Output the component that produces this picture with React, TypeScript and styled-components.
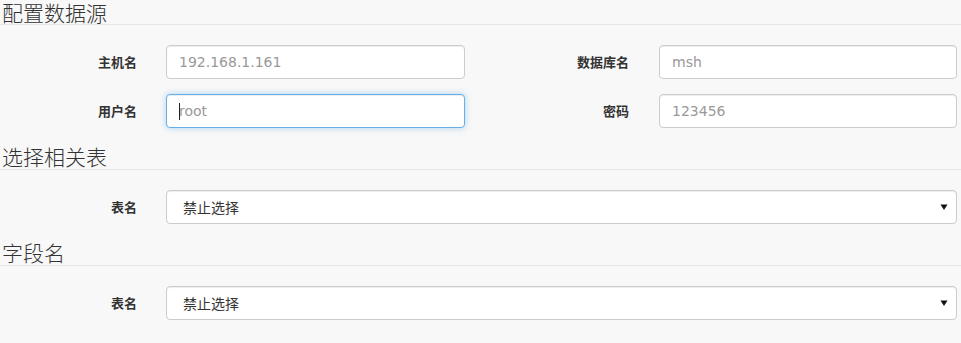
import React from "react";
import styled, { createGlobalStyle } from "styled-components";

const Global = createGlobalStyle`
  html, body { margin: 0; padding: 0; background: #f8f8f8; }
  body { font-family: "DejaVu Sans", "Noto Sans CJK SC", sans-serif; color: #333; }
  * { box-sizing: border-box; }
`;

const Page = styled.div`
  width: 961px;
  display: flex;
  flex-direction: column;
`;

const Legend = styled.div`
  font-family: "Noto Sans CJK SC", sans-serif;
  font-size: 21px;
  font-weight: 300;
  line-height: 26px;
  color: #333;
  padding-left: 2px;
  border-bottom: 1px solid #e5e5e5;
  margin-bottom: 20px;
  &:first-child {
    line-height: 24px;
  }
`;

const Row = styled.div<{ $cols: string }>`
  display: grid;
  grid-template-columns: ${(p) => p.$cols};
  align-items: center;
  margin-bottom: 15px;
`;

const Label = styled.label<{ $pad: number }>`
  font-family: "Noto Sans CJK SC", sans-serif;
  font-size: 13px;
  font-weight: 700;
  color: #333;
  text-align: right;
  padding-right: ${(p) => p.$pad}px;
  margin-top: -2px;
`;

const Input = styled.input<{ $focus?: boolean }>`
  display: block;
  width: 100%;
  height: 34px;
  padding: 6px 12px;
  font-family: "DejaVu Sans", sans-serif;
  font-size: 14px;
  color: #555;
  background: #fff;
  border: 1px solid ${(p) => (p.$focus ? "#66afe9" : "#ccc")};
  border-radius: 4px;
  box-shadow: ${(p) =>
    p.$focus
      ? "inset 0 1px 1px rgba(0,0,0,.075), 0 0 6px rgba(102,175,233,.5)"
      : "inset 0 1px 1px rgba(0,0,0,.075)"};
  outline: none;
  &::placeholder { color: #999; }
`;

const CaretWrap = styled.div`
  position: relative;
`;

const Caret = styled.span`
  position: absolute;
  left: 13px;
  top: 9px;
  width: 1px;
  height: 17px;
  background: #222;
  pointer-events: none;
`;

const SelectWrap = styled.div`
  position: relative;
`;

const Select = styled.select`
  display: block;
  width: 100%;
  height: 34px;
  padding: 6px 12px 6px 16px;
  font-family: "Noto Sans CJK SC", sans-serif;
  font-size: 14px;
  color: #333;
  background: #fff;
  border: 1px solid #ccc;
  border-radius: 4px;
  box-shadow: inset 0 1px 1px rgba(0,0,0,.075);
  appearance: none;
  -webkit-appearance: none;
  outline: none;
`;

const Arrow = styled.svg`
  position: absolute;
  right: 9px;
  top: 13px;
  pointer-events: none;
`;

const DropArrow = () => (
  <Arrow width="8" height="8" viewBox="0 0 8 8">
    <path d="M0.5 1.5 H7.5 L4 7 Z" fill="#111" />
  </Arrow>
);

const TableSelect = () => (
  <SelectWrap>
    <Select defaultValue="none">
      <option value="none">禁止选择</option>
    </Select>
    <DropArrow />
  </SelectWrap>
);

export default function App() {
  return (
    <>
      <Global />
      <Page>
        <Legend>配置数据源</Legend>
        <Row $cols="166px 299px 194px 298px">
          <Label $pad={29}>主机名</Label>
          <Input placeholder="192.168.1.161" />
          <Label $pad={30}>数据库名</Label>
          <Input placeholder="msh" />
        </Row>
        <Row $cols="166px 299px 194px 298px">
          <Label $pad={29}>用户名</Label>
          <CaretWrap>
            <Input $focus placeholder="root" />
            <Caret />
          </CaretWrap>
          <Label $pad={30}>密码</Label>
          <Input placeholder="123456" />
        </Row>
        <Legend>选择相关表</Legend>
        <Row $cols="166px 791px">
          <Label $pad={29}>表名</Label>
          <TableSelect />
        </Row>
        <Legend>字段名</Legend>
        <Row $cols="166px 791px">
          <Label $pad={29}>表名</Label>
          <TableSelect />
        </Row>
      </Page>
    </>
  );
}
